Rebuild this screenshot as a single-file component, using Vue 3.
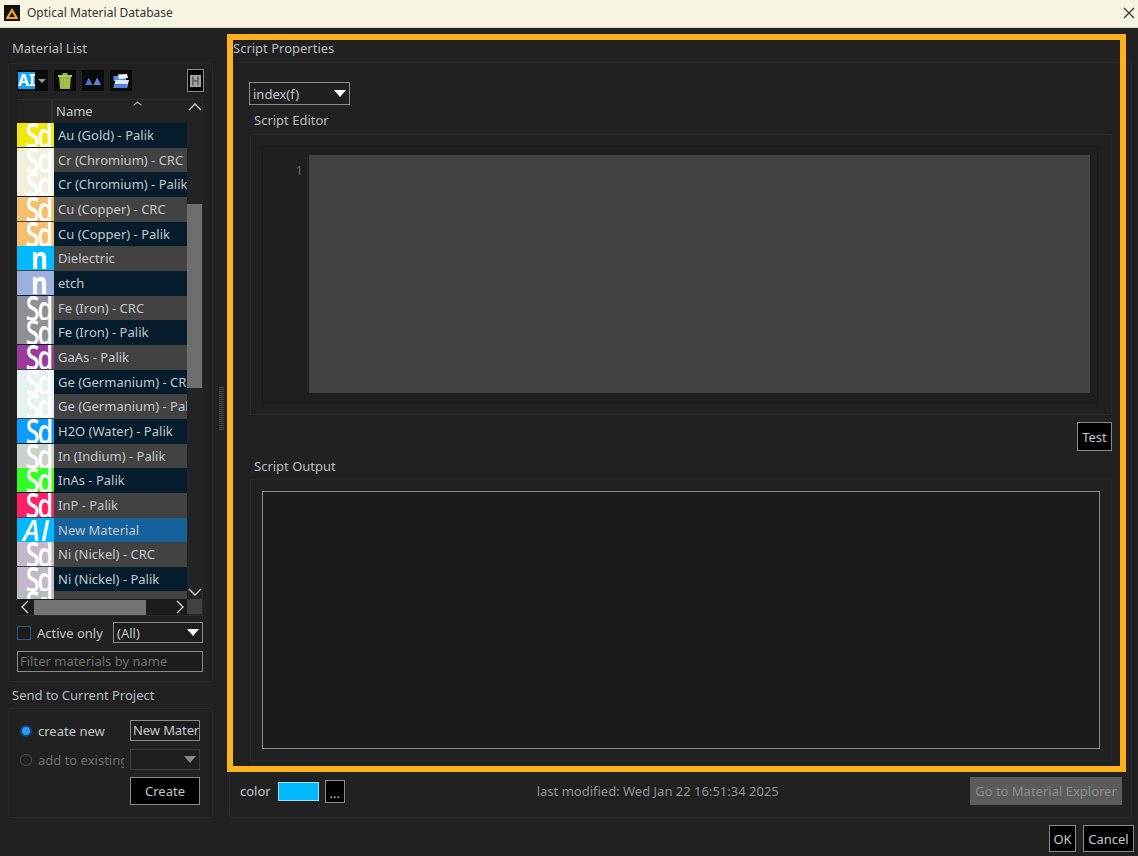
<template>
  <div class="window">
    <header class="titlebar">
      <svg class="titlebar__logo" viewBox="0 0 16 16" width="16" height="16">
        <rect width="16" height="16" fill="#111" />
        <path d="M8 3 L14.5 14 H1.5 Z M8 7.2 L5.2 12 H10.8 Z" fill="#f5a81c" fill-rule="evenodd" />
      </svg>
      <span class="titlebar__title">Optical Material Database</span>
      <svg class="titlebar__close" viewBox="0 0 12 12" width="12" height="12">
        <path d="M1 1 L11 11 M11 1 L1 11" stroke="#333" stroke-width="1.2" />
      </svg>
    </header>

    <div class="main">
      <aside class="left">
        <div class="caption caption--first">Material List</div>
        <section class="panel panel--list">
          <div class="toolbar">
            <div class="tool tool--add">
              <span class="tool__ai">AI</span>
              <svg viewBox="0 0 8 4" width="8" height="4"><path d="M0 0 H8 L4 4 Z" fill="#9a9a9a" /></svg>
            </div>
            <div class="tool">
              <svg viewBox="0 0 14 16" width="14" height="16">
                <path d="M0 2 H14 V4 H0 Z" fill="#b3cb58" />
                <path d="M4.5 0 H9.5 V2 H4.5 Z" fill="#97b040" />
                <path d="M1 4 H13 L12 16 H2 Z" fill="#9ab345" />
                <path d="M4 5.5 V14.5 M7 5.5 V14.5 M10 5.5 V14.5" stroke="#b8cf63" stroke-width="1" />
              </svg>
            </div>
            <div class="tool">
              <svg viewBox="0 0 16 8" width="16" height="8">
                <path d="M0 8 L3.8 0.5 L7.6 8 Z" fill="#4a74c9" />
                <path d="M8.4 8 L12.2 0.5 L16 8 Z" fill="#5f86d6" />
              </svg>
            </div>
            <div class="tool">
              <svg viewBox="0 0 16 14" width="16" height="14">
                <path d="M0.5 2 H6 L7.5 4 H13 V7 H0.5 Z" fill="#5c8ee0" />
                <path d="M5 0.5 L14 0 L15 4 L6 5 Z" fill="#f0f4fb" />
                <path d="M0.5 14 L2.5 6 H16 L14 14 Z" fill="#d9e6f9" />
                <path d="M0.5 14 L1.8 10 H15 L14 14 Z" fill="#4f83dc" />
              </svg>
            </div>
            <div class="tool tool--toggle">
              <svg viewBox="0 0 11 12" width="11" height="12">
                <rect width="11" height="12" fill="#a4a4a4" />
                <path d="M2 1.5 H4 V5 H7 V1.5 H9 V10.5 H7 V7 H4 V10.5 H2 Z" fill="#6a6a6a" />
              </svg>
            </div>
          </div>

          <div class="table">
            <div class="table__main">
              <div class="table__head">
                <div class="table__head-icon"></div>
                <div class="table__head-name">
                  Name
                  <svg class="table__sort" viewBox="0 0 10 5" width="9" height="5">
                    <path d="M0.5 4.5 L5 0.8 L9.5 4.5" fill="none" stroke="#a9a9a9" stroke-width="1.2" />
                  </svg>
                </div>
              </div>
              <div class="table__rows">
                <div
                  v-for="(m, i) in materials"
                  :key="m.name + i"
                  class="row"
                  :class="{ 'row--alt': i % 2 === 1, 'row--selected': m.selected }"
                >
                  <div class="row__swatch" :style="{ background: m.color }">
                    <span class="row__glyph" :class="'row__glyph--' + m.type">{{ m.type }}</span>
                  </div>
                  <div class="row__name">{{ m.name }}</div>
                </div>
              </div>
              <div class="hscroll">
                <svg viewBox="0 0 10 14" width="10" height="14">
                  <path d="M8 1 L2 7 L8 13" fill="none" stroke="#d8d8d8" stroke-width="1.4" />
                </svg>
                <div class="hscroll__thumb"></div>
                <svg class="hscroll__next" viewBox="0 0 10 14" width="10" height="14">
                  <path d="M2 1 L8 7 L2 13" fill="none" stroke="#d8d8d8" stroke-width="1.4" />
                </svg>
              </div>
            </div>
            <div class="vscroll">
              <svg class="vscroll__up" viewBox="0 0 14 8" width="14" height="8">
                <path d="M1 7 L7 1 L13 7" fill="none" stroke="#d8d8d8" stroke-width="1.4" />
              </svg>
              <div class="vscroll__thumb"></div>
              <svg class="vscroll__down" viewBox="0 0 14 8" width="14" height="8">
                <path d="M1 1 L7 7 L13 1" fill="none" stroke="#d8d8d8" stroke-width="1.4" />
              </svg>
              <div class="vscroll__corner"></div>
            </div>
          </div>

          <div class="filter-row">
            <span class="checkbox"></span>
            <span class="filter-row__label">Active only</span>
            <div class="select select--all">
              <span>(All)</span>
              <i class="caret"></i>
            </div>
          </div>
          <div class="input input--filter">Filter materials by name</div>
        </section>

        <div class="caption caption--second">Send to Current Project</div>
        <section class="panel panel--send">
          <div class="send-row">
            <div class="send-row__label">
              <span class="radio radio--on"></span>
              <span>create new</span>
            </div>
            <div class="input input--name">New Material</div>
          </div>
          <div class="send-row">
            <div class="send-row__label send-row__label--off">
              <span class="radio"></span>
              <span>add to existing</span>
            </div>
            <div class="select select--off"><i class="caret caret--off"></i></div>
          </div>
          <div class="send-row">
            <div class="send-row__label"></div>
            <button class="btn btn--create" type="button">Create</button>
          </div>
        </section>
      </aside>

      <div class="splitter"><div class="splitter__grip"></div></div>

      <section class="right">
        <div class="caption caption--script">Script Properties</div>
        <div class="props">
          <div class="select select--index">
            <span>index(f)</span>
            <i class="caret"></i>
          </div>
          <div class="group-title group-title--editor">Script Editor</div>
          <div class="group group--editor">
            <div class="editor">
              <div class="editor__gutter">1</div>
              <div class="editor__area"></div>
            </div>
          </div>
          <div class="test-row">
            <button class="btn btn--test" type="button">Test</button>
          </div>
          <div class="group-title group-title--output">Script Output</div>
          <div class="group group--output">
            <div class="output"></div>
          </div>
          <div class="bottom-row">
            <span>color</span>
            <span class="color-swatch"></span>
            <button class="btn btn--dots" type="button">...</button>
            <span class="bottom-row__modified">last modified: Wed Jan 22 16:51:34 2025</span>
            <button class="btn btn--explorer" type="button">Go to Material Explorer</button>
          </div>
        </div>
      </section>
    </div>

    <footer class="footer">
      <button class="btn btn--ok" type="button">OK</button>
      <button class="btn btn--cancel" type="button">Cancel</button>
    </footer>

    <div class="highlight"></div>
  </div>
</template>

<script setup>
const materials = [
  { name: 'Au (Gold) - Palik', color: '#f2e60f', type: 'Sd' },
  { name: 'Cr (Chromium) - CRC', color: '#f3efdf', type: 'Sd' },
  { name: 'Cr (Chromium) - Palik', color: '#f3efdf', type: 'Sd' },
  { name: 'Cu (Copper) - CRC', color: '#f5c06e', type: 'Sd' },
  { name: 'Cu (Copper) - Palik', color: '#f5c06e', type: 'Sd' },
  { name: 'Dielectric', color: '#00b9ff', type: 'n' },
  { name: 'etch', color: '#9dafdc', type: 'n' },
  { name: 'Fe (Iron) - CRC', color: '#8e9094', type: 'Sd' },
  { name: 'Fe (Iron) - Palik', color: '#8e9094', type: 'Sd' },
  { name: 'GaAs - Palik', color: '#9b3a9b', type: 'Sd' },
  { name: 'Ge (Germanium) - CRC', color: '#e8f1f1', type: 'Sd' },
  { name: 'Ge (Germanium) - Palik', color: '#e8f1f1', type: 'Sd' },
  { name: 'H2O (Water) - Palik', color: '#0a9cff', type: 'Sd' },
  { name: 'In (Indium) - Palik', color: '#c9d3c9', type: 'Sd' },
  { name: 'InAs - Palik', color: '#33ff22', type: 'Sd' },
  { name: 'InP - Palik', color: '#ff1f66', type: 'Sd' },
  { name: 'New Material', color: '#00b9ff', type: 'AI', selected: true },
  { name: 'Ni (Nickel) - CRC', color: '#c2b8c8', type: 'Sd' },
  { name: 'Ni (Nickel) - Palik', color: '#c2b8c8', type: 'Sd' },
  { name: '', color: '#b4bcbc', type: 'Sd' }
];
</script>

<style>
html,
body {
  margin: 0;
  background: #212121;
}
</style>

<style scoped>
* {
  box-sizing: border-box;
}

.window {
  position: relative;
  width: 1138px;
  height: 856px;
  overflow: hidden;
  display: flex;
  flex-direction: column;
  background: #212121;
  color: #c3c8cc;
  font-family: "Noto Sans", "Open Sans", sans-serif;
  font-size: 13px;
}

.titlebar {
  flex: none;
  height: 28px;
  display: flex;
  align-items: center;
  padding: 0 2px 2px 4px;
  background: #f8f5e3;
  border-bottom: 1px solid #d9d7c8;
  color: #333;
  font-size: 12px;
}

.titlebar__logo {
  flex: none;
}

.titlebar__title {
  margin-left: 7px;
}

.titlebar__close {
  margin-left: auto;
  margin-right: 1px;
}

.main {
  flex: none;
  height: 790px;
  display: flex;
  padding-left: 8px;
}

.left {
  flex: none;
  width: 205px;
  display: flex;
  flex-direction: column;
}

.caption {
  color: #b7bcc0;
  line-height: 18px;
}

.caption--first {
  height: 35px;
  padding: 11px 0 0 4px;
}

.caption--second {
  height: 26px;
  padding: 4px 0 0 4px;
}

.caption--script {
  height: 34px;
  padding: 11px 0 0 4px;
}

.panel {
  border: 1px solid #2a2a2a;
  border-radius: 3px;
}

.panel--list {
  height: 619px;
  padding: 6px 9px 0 8px;
}

.panel--send {
  height: 110px;
  padding: 11px 12px 0 11px;
}

.toolbar {
  height: 22px;
  display: flex;
  gap: 6px;
}

.tool {
  width: 22px;
  height: 21px;
  background: #0a0a0a;
  display: flex;
  align-items: center;
  justify-content: center;
}

.tool--add {
  width: 31px;
  justify-content: flex-start;
  padding-left: 1px;
  gap: 3px;
}

.tool__ai {
  width: 17px;
  height: 17px;
  background: #12a5f5;
  color: #fff;
  font-size: 16px;
  font-weight: 700;
  line-height: 17px;
  text-align: center;
}

.tool--toggle {
  width: 17px;
  height: 23px;
  margin: -1px -1px 0 auto;
  border: 1px solid #8a8a8a;
  background: #000;
}

.table {
  margin-top: 7px;
  height: 517px;
  display: flex;
  border: 1px solid #2c2c2c;
  border-left: none;
  background: #232323;
}

.table__main {
  width: 170px;
  flex: none;
  display: flex;
  flex-direction: column;
}

.table__head {
  flex: none;
  height: 23px;
  display: flex;
}

.table__head-icon {
  width: 36px;
  border-right: 2px solid #333;
}

.table__head-name {
  position: relative;
  flex: 1;
  padding: 2px 0 0 3px;
  line-height: 18px;
}

.table__sort {
  position: absolute;
  left: 80px;
  top: 1px;
}

.table__rows {
  flex: none;
  height: 476px;
  overflow: hidden;
}

.row {
  height: 24.67px;
  display: flex;
  background: #041c2b;
}

.row--alt {
  background: #424242;
}

.row--selected {
  background: #14619b;
}

.row__swatch {
  flex: none;
  width: 37px;
  height: 24px;
  overflow: hidden;
  display: flex;
  justify-content: flex-end;
  align-items: center;
}

.row__glyph {
  color: #fff;
  font-family: "Open Sans", "Noto Sans", sans-serif;
  font-size: 35px;
  font-weight: 600;
  line-height: 24px;
  letter-spacing: -3px;
  white-space: nowrap;
  transform: scaleX(0.72);
  transform-origin: right center;
  margin-right: 3px;
}

.row__glyph--n {
  margin-right: 6px;
  font-size: 30px;
  font-weight: 700;
  letter-spacing: 0;
  transform: scaleX(0.85);
}

.row__glyph--AI {
  margin-right: 4px;
  font-size: 28px;
  font-style: italic;
  font-weight: 600;
  letter-spacing: 1px;
  transform: none;
}

.row__name {
  flex: 1;
  min-width: 0;
  overflow: hidden;
  white-space: nowrap;
  padding: 2px 0 0 4px;
  line-height: 20px;
}

.hscroll {
  flex: none;
  height: 16px;
  display: flex;
  align-items: center;
  padding-left: 3px;
  background: #1c1c1c;
}

.hscroll__thumb {
  width: 112px;
  height: 15px;
  margin-left: 4px;
  background: #747474;
}

.hscroll__next {
  margin-left: auto;
  margin-right: 2px;
}

.vscroll {
  flex: 1;
  display: flex;
  flex-direction: column;
  align-items: center;
}

.vscroll__up {
  margin-top: 3px;
}

.vscroll__thumb {
  width: 15px;
  height: 184px;
  margin-top: 93px;
  background: #6e6e6e;
}

.vscroll__down {
  margin-top: auto;
  margin-bottom: 3px;
}

.vscroll__corner {
  width: 15px;
  height: 15px;
  margin-bottom: 1px;
  background: #414141;
}

.filter-row {
  margin-top: 6px;
  height: 21px;
  display: flex;
  align-items: center;
}

.checkbox {
  width: 14px;
  height: 14px;
  border: 1px solid #1e5c90;
  background: #1b1b1b;
}

.filter-row__label {
  margin-left: 6px;
}

.select {
  display: flex;
  align-items: center;
  justify-content: space-between;
  border: 1px solid #8a8a8a;
  background: #1e1e1e;
  height: 21px;
  padding: 0 3px 0 3px;
}

.select--all {
  width: 90px;
  margin-left: auto;
}

.select--off {
  width: 70px;
  border-color: #3c3c3c;
  justify-content: flex-end;
}

.select--index {
  width: 101px;
  height: 23px;
  background: #202020;
}

.caret {
  width: 0;
  height: 0;
  border-left: 6px solid transparent;
  border-right: 6px solid transparent;
  border-top: 7px solid #fff;
}

.caret--off {
  border-top-color: #8a8a8a;
}

.input {
  height: 21px;
  border: 1px solid #8a8a8a;
  background: #1c1c1c;
  line-height: 19px;
  overflow: hidden;
  white-space: nowrap;
}

.input--filter {
  margin-top: 8px;
  padding-left: 2px;
  color: #707070;
}

.input--name {
  width: 70px;
  padding-left: 2px;
  letter-spacing: -0.1px;
  color: #c3c8cc;
}

.send-row {
  height: 21px;
  display: flex;
  margin-bottom: 8px;
}

.send-row:last-child {
  height: 28px;
  margin-bottom: 0;
  margin-top: -1px;
}

.send-row__label {
  width: 104px;
  margin-right: 6px;
  display: flex;
  align-items: center;
  gap: 6px;
  overflow: hidden;
  white-space: nowrap;
}

.send-row__label--off {
  color: #6e6e6e;
}

.radio {
  flex: none;
  width: 12px;
  height: 12px;
  border-radius: 50%;
  border: 1px solid #4c4c4c;
}

.radio--on {
  border: 2px solid #134a75;
  background: #2b9bff;
  box-shadow: inset 0 0 0 1px #2b9bff;
}

.btn {
  border: 1px solid #8a8a8a;
  background: #000;
  color: #c3c8cc;
  font: inherit;
  padding: 0;
}

.btn--create {
  width: 70px;
  height: 28px;
}

.splitter {
  flex: none;
  width: 16px;
  display: flex;
  align-items: center;
  justify-content: center;
}

.splitter__grip {
  width: 5px;
  height: 43px;
  margin-top: -29px;
  background: repeating-linear-gradient(0deg, #4a4a4a 0 1px, transparent 1px 2px);
}

.right {
  flex: none;
  width: 903px;
  display: flex;
  flex-direction: column;
}

.props {
  flex: 1;
  padding: 19px 19px 0;
  border: 1px solid #2a2a2a;
  border-radius: 3px;
}

.group-title {
  padding-left: 5px;
  color: #b7bcc0;
  line-height: 18px;
}

.group-title--editor {
  height: 29px;
  padding-top: 6px;
}

.group-title--output {
  height: 28px;
  padding-top: 6px;
}

.group {
  margin-left: 1px;
  border: 1px solid #2a2a2a;
  padding: 11px;
}

.group--editor {
  height: 281px;
}

.group--output {
  height: 282px;
}

.editor {
  width: 836px;
  height: 257px;
  display: flex;
  background: #1f1f1f;
  border: 1px solid #1b1b1b;
}

.editor__gutter {
  width: 46px;
  padding: 14px 6px 0 0;
  text-align: right;
  color: #6a6a6a;
  line-height: 18px;
}

.editor__area {
  width: 781px;
  height: 238px;
  margin-top: 8px;
  background: #424242;
}

.test-row {
  display: flex;
  justify-content: flex-end;
  margin-top: 7px;
}

.btn--test {
  width: 35px;
  height: 29px;
}

.output {
  width: 838px;
  height: 258px;
  border: 1px solid #8a8a8a;
  background: #1b1b1b;
}

.bottom-row {
  margin: 16px -10px 0 -9px;
  height: 28px;
  display: flex;
  align-items: center;
  color: #c3c8cc;
}

.color-swatch {
  width: 41px;
  height: 19px;
  margin-left: 7px;
  background: #00b9ff;
  border: 1px solid #9fdcf5;
}

.btn--dots {
  width: 20px;
  height: 23px;
  margin-left: 6px;
  line-height: 24px;
}

.bottom-row__modified {
  margin-left: 192px;
  color: #8f9498;
}

.btn--explorer {
  width: 152px;
  height: 28px;
  margin-left: auto;
  border: none;
  background: #5c5c5c;
  color: #8d8d8d;
}

.footer {
  flex: none;
  display: flex;
  justify-content: flex-end;
  gap: 7px;
  padding: 7px 4px 0 0;
}

.btn--ok {
  width: 27px;
  height: 27px;
}

.btn--cancel {
  width: 51px;
  height: 27px;
}

.highlight {
  position: absolute;
  left: 227px;
  top: 34px;
  width: 899px;
  height: 738px;
  border: 6px solid #fdb11c;
  pointer-events: none;
}
</style>
